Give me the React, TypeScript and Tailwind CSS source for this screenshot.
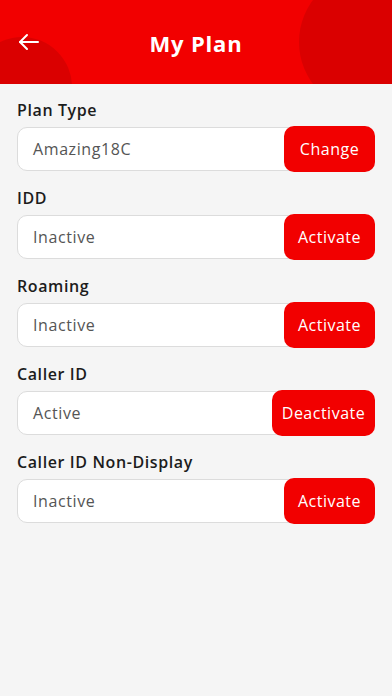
import React from "react";

const rows = [
  { label: "Plan Type", value: "Amazing18C", action: "Change", w: "w-[91px]" },
  { label: "IDD", value: "Inactive", action: "Activate", w: "w-[91px]" },
  { label: "Roaming", value: "Inactive", action: "Activate", w: "w-[91px]" },
  { label: "Caller ID", value: "Active", action: "Deactivate", w: "w-[103px]" },
  { label: "Caller ID Non-Display", value: "Inactive", action: "Activate", w: "w-[91px]" },
];

export default function App() {
  return (
    <div
      className="w-[392px] h-[696px] bg-[#f5f5f5] overflow-hidden"
      style={{ fontFamily: '"Open Sans", "Liberation Sans", sans-serif' }}
    >
      <header className="relative h-[84px] bg-[#f20000] overflow-hidden flex items-center justify-center">
        <div className="absolute left-[-28px] top-[37px] w-[100px] h-[100px] rounded-full bg-[#da0000]" />
        <div className="absolute left-[299px] top-[-28px] w-[140px] h-[140px] rounded-full bg-[#da0000]" />
        <button className="absolute left-[17px] top-[30px] text-white">
          <svg width="24" height="24" viewBox="0 0 24 24" fill="none" stroke="currentColor" strokeWidth="2" strokeLinecap="round" strokeLinejoin="round">
            <path d="M21 12H3" />
            <path d="M10 5l-7 7 7 7" />
          </svg>
        </button>
        <h1 className="relative text-white text-[22px] font-bold tracking-[0.8px] leading-none mt-[2px]">My Plan</h1>
      </header>
      <main className="px-[17px] pt-[14px] flex flex-col gap-[14px]">
        {rows.map((r) => (
          <div key={r.label} className="flex flex-col gap-[4px]">
            <div className="h-[24px] leading-[24px] text-[16px] font-semibold tracking-[0.6px] text-[#1c1c1c]">{r.label}</div>
            <div className="relative h-[46px]">
              <div className="absolute inset-x-0 top-[1px] bottom-[1px] rounded-[10px] bg-white border border-[#dcdcdc] flex items-center pl-[15px]">
                <span className="text-[16px] tracking-[0.6px] text-[#555555]">{r.value}</span>
              </div>
              <button className={`absolute right-0 top-0 h-[46px] ${r.w} flex items-center justify-center rounded-[10px] bg-[#f20000] text-white text-[16px] font-medium tracking-[0.5px]`}>
                {r.action}
              </button>
            </div>
          </div>
        ))}
      </main>
    </div>
  );
}
